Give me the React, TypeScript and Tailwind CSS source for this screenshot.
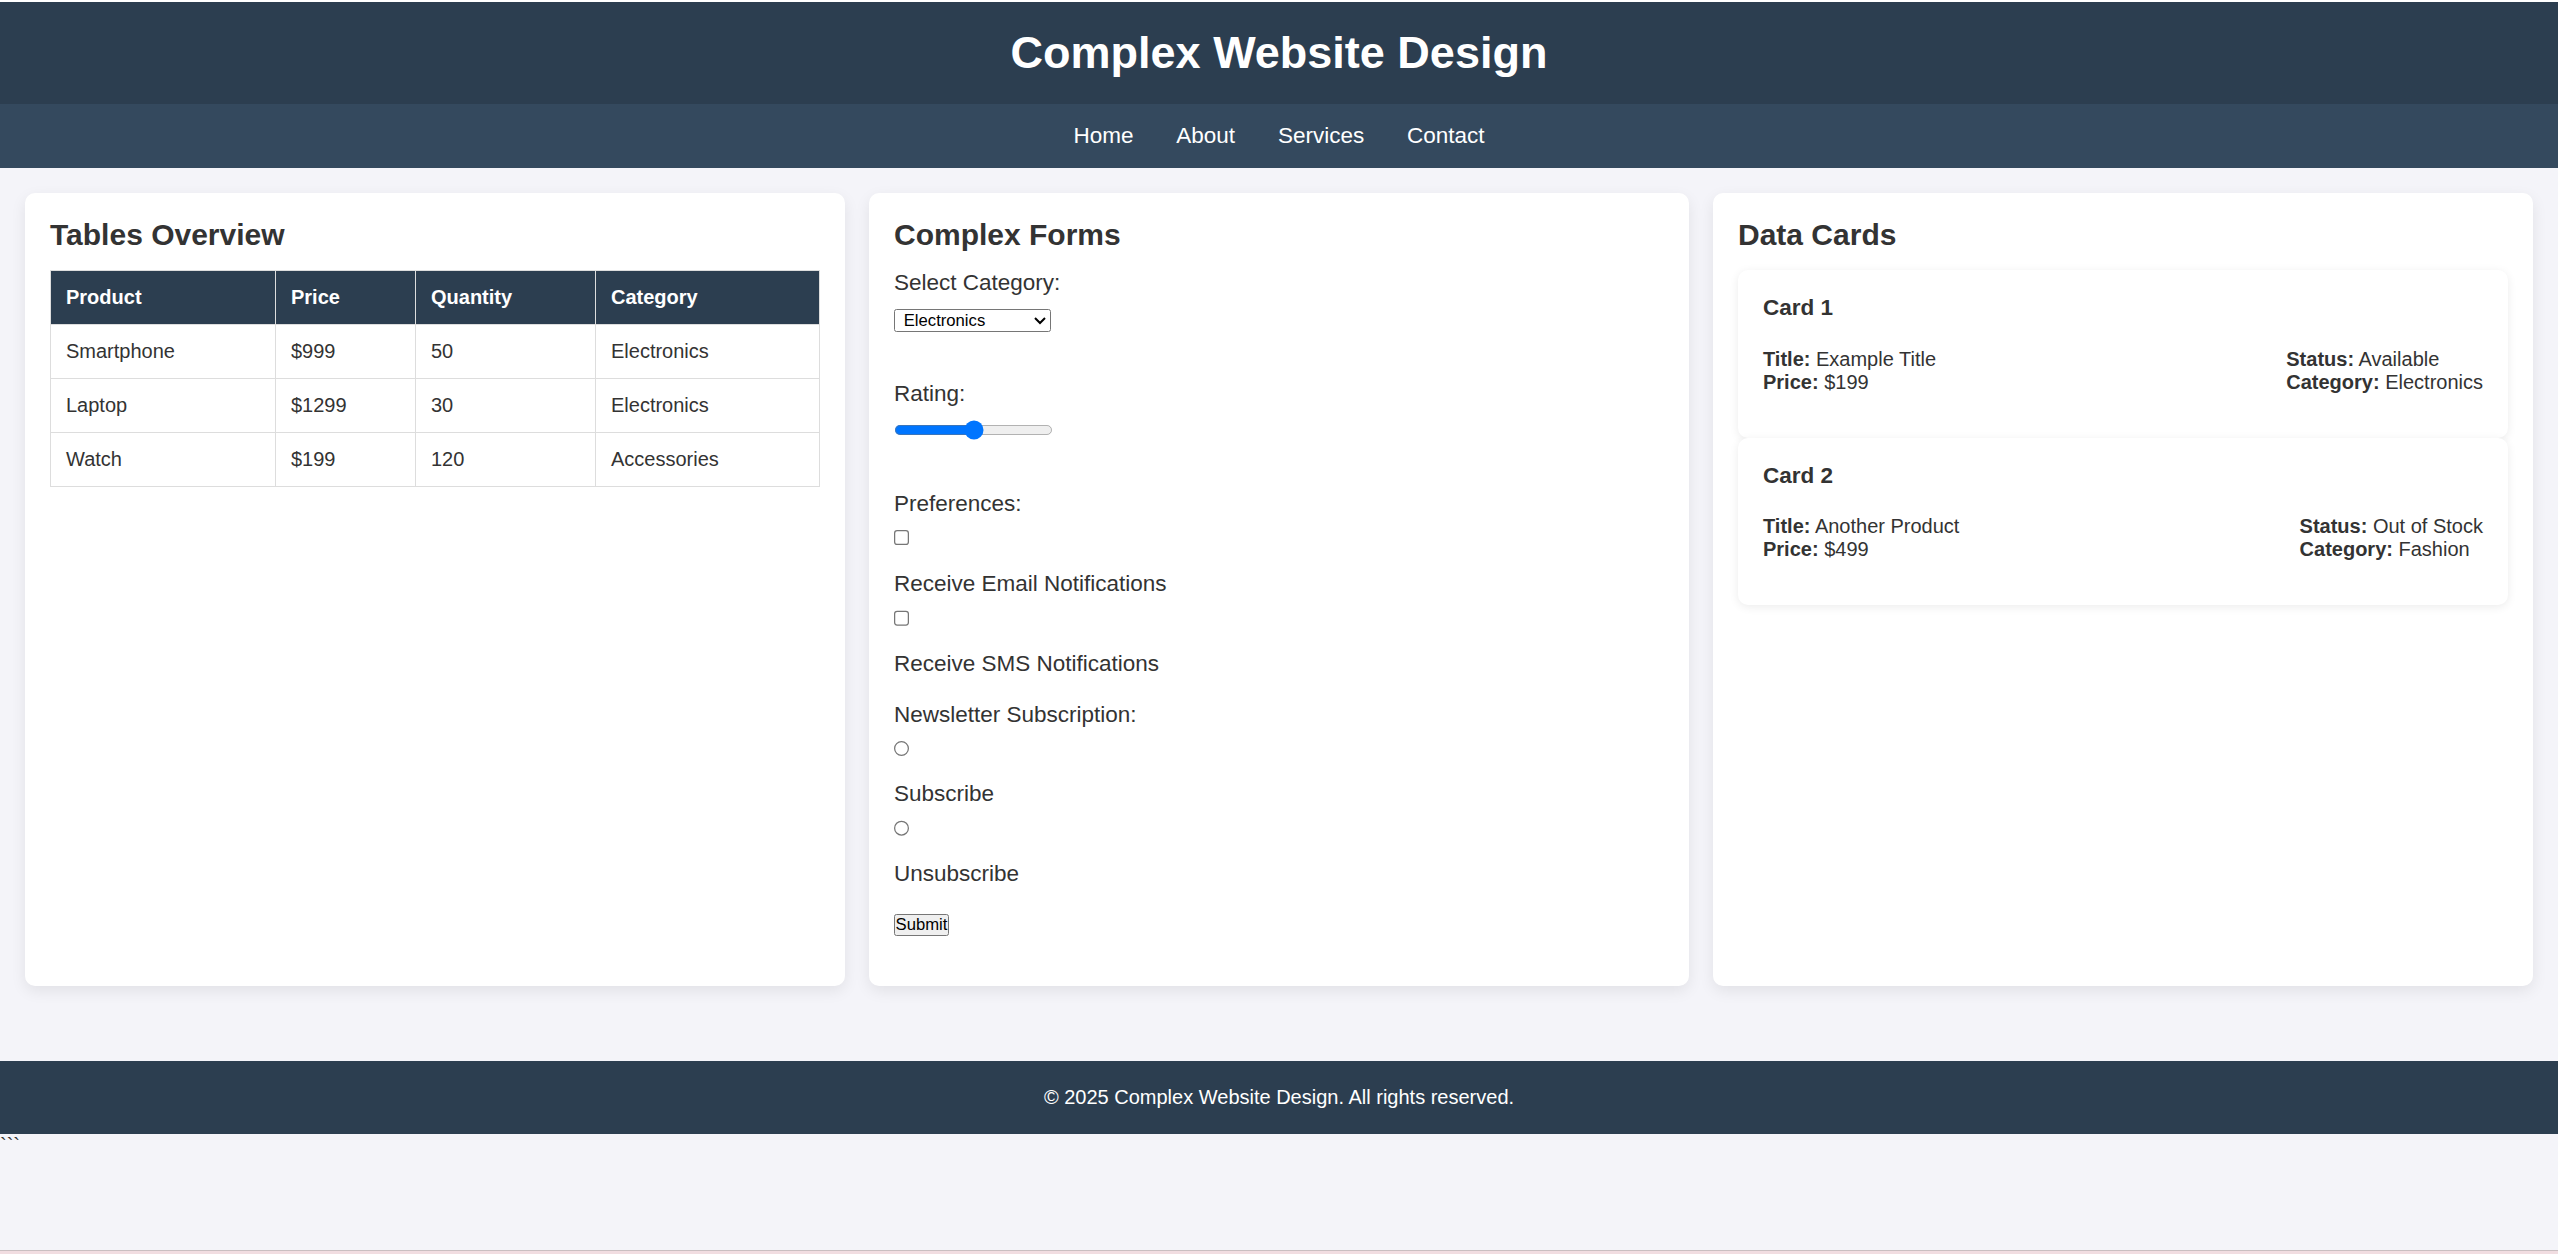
import React from "react";

const products = [
  { name: "Smartphone", price: "$999", qty: "50", category: "Electronics" },
  { name: "Laptop", price: "$1299", qty: "30", category: "Electronics" },
  { name: "Watch", price: "$199", qty: "120", category: "Accessories" },
];

const cards = [
  {
    title: "Card 1",
    left: [
      ["Title:", "Example Title"],
      ["Price:", "$199"],
    ],
    right: [
      ["Status:", "Available"],
      ["Category:", "Electronics"],
    ],
  },
  {
    title: "Card 2",
    left: [
      ["Title:", "Another Product"],
      ["Price:", "$499"],
    ],
    right: [
      ["Status:", "Out of Stock"],
      ["Category:", "Fashion"],
    ],
  },
];

function Panel({ title, children }: { title: string; children: React.ReactNode }) {
  return (
    <section className="bg-white rounded-[10px] shadow-[0_5px_15px_rgba(0,0,0,0.08)] p-[25px]">
      <h2 className="text-[30px] leading-[34px] font-bold text-[#333] mb-[18px]">{title}</h2>
      {children}
    </section>
  );
}

function Field({ label, value }: { label: string; value: string }) {
  return (
    <div>
      <span className="font-bold">{label}</span> {value}
    </div>
  );
}

export default function App() {
  return (
    <div className="min-h-screen flex flex-col bg-[#f4f4f9] text-[#333] font-['Liberation_Sans',Arial,sans-serif]">
      <div className="h-[2px] bg-white" />

      {/* Header */}
      <header className="bg-[#2c3e50] py-[25px] text-center">
        <h1 className="text-[45px] leading-[52px] font-bold text-white">Complex Website Design</h1>
      </header>

      {/* Nav */}
      <nav className="bg-[#34495e] py-[19px] flex justify-center">
        {["Home", "About", "Services", "Contact"].map((item) => (
          <a key={item} href="#" className="mx-[21.4px] text-[22.5px] leading-[26px] text-white">
            {item}
          </a>
        ))}
      </nav>

      {/* Main grid */}
      <main className="grid grid-cols-3 gap-[24px] px-[25px] pt-[25px]">
        <Panel title="Tables Overview">
          <table className="w-full table-fixed border-collapse text-[20px] leading-[23px]">
            <colgroup>
              <col className="w-[225px]" />
              <col className="w-[140px]" />
              <col className="w-[180px]" />
              <col />
            </colgroup>
            <thead>
              <tr>
                {["Product", "Price", "Quantity", "Category"].map((h) => (
                  <th key={h} className="bg-[#2c3e50] text-white font-bold text-left p-[15px] border border-[#ddd]">
                    {h}
                  </th>
                ))}
              </tr>
            </thead>
            <tbody>
              {products.map((p) => (
                <tr key={p.name}>
                  <td className="p-[15px] border border-[#ddd]">{p.name}</td>
                  <td className="p-[15px] border border-[#ddd]">{p.price}</td>
                  <td className="p-[15px] border border-[#ddd]">{p.qty}</td>
                  <td className="p-[15px] border border-[#ddd]">{p.category}</td>
                </tr>
              ))}
            </tbody>
          </table>
        </Panel>

        <Panel title="Complex Forms">
          <form className="flex flex-col items-start text-[22.5px] leading-[26px] pb-[25px]">
            <label htmlFor="category">Select Category:</label>
            <select
              id="category"
              defaultValue="electronics"
              className="mt-[10.4px] [zoom:1.25] w-[125.6px] h-[18px] text-[13.333px] leading-[normal] text-black bg-white border border-[#767676] rounded-[2px] pl-[3px]"
            >
              <option value="electronics">Electronics</option>
              <option value="fashion">Fashion</option>
              <option value="home">Home Appliances</option>
            </select>

            <label htmlFor="rating" className="mt-[49.5px]">Rating:</label>
            <input id="rating" type="range" min={1} max={5} defaultValue={3} className="mt-[10.4px] [zoom:1.25] w-[127.5px] h-[16px]" />

            <label className="mt-[50.5px]">Preferences:</label>
            <input type="checkbox" id="email" className="mt-[10.4px] [zoom:1.25]" />
            <label htmlFor="email" className="mt-[25px]">Receive Email Notifications</label>
            <input type="checkbox" id="sms" className="mt-[10.8px] [zoom:1.25]" />
            <label htmlFor="sms" className="mt-[24.5px]">Receive SMS Notifications</label>

            <label className="mt-[24.5px]">Newsletter Subscription:</label>
            <input type="radio" name="newsletter" id="sub" className="mt-[10.4px] [zoom:1.25]" />
            <label htmlFor="sub" className="mt-[24.5px]">Subscribe</label>
            <input type="radio" name="newsletter" id="unsub" className="mt-[10.4px] [zoom:1.25]" />
            <label htmlFor="unsub" className="mt-[24px]">Unsubscribe</label>

            <button
              type="button"
              className="mt-[21.6px] [zoom:1.25] h-[18px] w-[44px] text-[13.333px] leading-[normal] text-black bg-[#efefef] border border-[#767676] rounded-[2px]"
            >
              Submit
            </button>
          </form>
        </Panel>

        <Panel title="Data Cards">
          <div className="flex flex-col">
            {cards.map((c) => (
              <div key={c.title} className="bg-white rounded-[10px] shadow-[0_2px_10px_rgba(0,0,0,0.08)] p-[25px]">
                <h3 className="text-[22.5px] leading-[26px] font-bold mb-[26.5px]">{c.title}</h3>
                <div className="flex justify-between text-[20px] leading-[23px] mb-[19px]">
                  <div>
                    {c.left.map(([l, v]) => (
                      <Field key={l} label={l} value={v} />
                    ))}
                  </div>
                  <div>
                    {c.right.map(([l, v]) => (
                      <Field key={l} label={l} value={v} />
                    ))}
                  </div>
                </div>
              </div>
            ))}
          </div>
        </Panel>
      </main>

      {/* Footer */}
      <footer className="mt-[75px] bg-[#2c3e50] py-[25px] text-center text-white text-[20px] leading-[23px]">
        © 2025 Complex Website Design. All rights reserved.
      </footer>
      <div className="text-[20px] leading-[23px]">```</div>

      <div className="flex-1" />
      <div className="h-[1px] bg-[#c9bfc1]" />
      <div className="h-[3px] bg-[#f1dde1]" />
    </div>
  );
}
